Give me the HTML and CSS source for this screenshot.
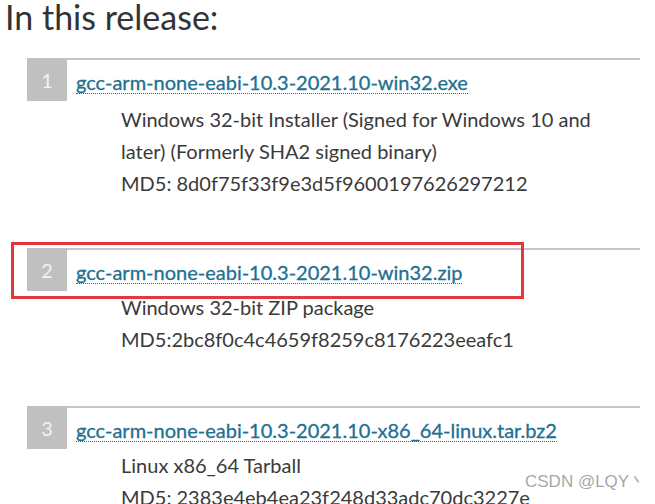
FILE: index.html
```html
<!DOCTYPE html>
<html>
<head>
<meta charset="utf-8">
<link rel="stylesheet" href="styles.css">
</head>
<body>
<div class="page">
  <h2 class="title">In this release:</h2>
  <ol class="releases">
    <li class="release">
      <div class="release-head">
        <span class="num">1</span>
        <div class="link-wrap"><a class="file-link" href="#">gcc-arm-none-eabi-10.3-2021.10-win32.exe</a></div>
      </div>
      <div class="desc desc-first">
        <div>Windows 32-bit Installer (Signed for Windows 10 and later) (Formerly SHA2 signed binary)</div>
        <div>MD5: 8d0f75f33f9e3d5f9600197626297212</div>
      </div>
    </li>
    <li class="release">
      <div class="release-head highlighted">
        <span class="num">2</span>
        <div class="link-wrap"><a class="file-link" href="#">gcc-arm-none-eabi-10.3-2021.10-win32.zip</a></div>
        <span class="mark"></span>
      </div>
      <div class="desc">
        <div>Windows 32-bit ZIP package</div>
        <div>MD5:2bc8f0c4c4659f8259c8176223eeafc1</div>
      </div>
    </li>
    <li class="release">
      <div class="release-head">
        <span class="num">3</span>
        <div class="link-wrap"><a class="file-link" href="#">gcc-arm-none-eabi-10.3-2021.10-x86_64-linux.tar.bz2</a></div>
      </div>
      <div class="desc">
        <div>Linux x86_64 Tarball</div>
        <div>MD5: 2383e4eb4ea23f248d33adc70dc3227e</div>
      </div>
    </li>
  </ol>
  <div class="watermark">CSDN @LQY丶</div>
</div>
</body>
</html>
```
FILE: styles.css
```css
html, body {
  margin: 0;
  padding: 0;
  background: #ffffff;
}
body {
  width: 655px;
  height: 504px;
  overflow: hidden;
  font-family: Lato, "Open Sans", sans-serif;
}
.page {
  position: relative;
  height: 504px;
}
.title {
  margin: 0;
  padding-left: 5px;
  font-size: 34px;
  line-height: 40px;
  margin-top: -3px;
  font-weight: normal;
  color: #333333;
}
.releases {
  list-style: none;
  margin: 21px 15px 0 27px;
  padding: 0;
}
.release {
  margin-bottom: 51px;
}
.release-head {
  position: relative;
  display: flex;
  height: 43px;
}
.num {
  width: 40px;
  flex: none;
  background: #c0c0c0;
  color: #f2f2f2;
  font-size: 20px;
  display: flex;
  align-items: center;
  justify-content: center;
}
.link-wrap {
  flex: 1;
  border-top: 2px solid #c6c6c6;
  padding-left: 9px;
  display: flex;
  align-items: center;
}
.file-link {
  color: #1e7092;
  font-size: 20px;
  text-decoration: none;
  border-bottom: 1px dotted #1e7092;
  line-height: 22px;
  margin-top: 4px;
  -webkit-text-stroke: 0.3px #1e7092;
}
.mark {
  position: absolute;
  left: -16px;
  top: -6px;
  width: 507px;
  height: 51px;
  border: 3px solid #e3373f;
}
.desc {
  margin-left: 94px;
  margin-top: 0;
  margin-right: 20px;
  font-size: 20px;
  line-height: 32px;
  color: #3a3a3a;
}
.desc-first {
  padding-top: 2px;
  margin-bottom: -2px;
}
.watermark {
  position: absolute;
  left: 525px;
  top: 473px;
  font-family: "Liberation Sans", Arial, sans-serif;
  font-size: 17px;
  color: rgba(150, 150, 150, 0.85);
  white-space: nowrap;
}
```
